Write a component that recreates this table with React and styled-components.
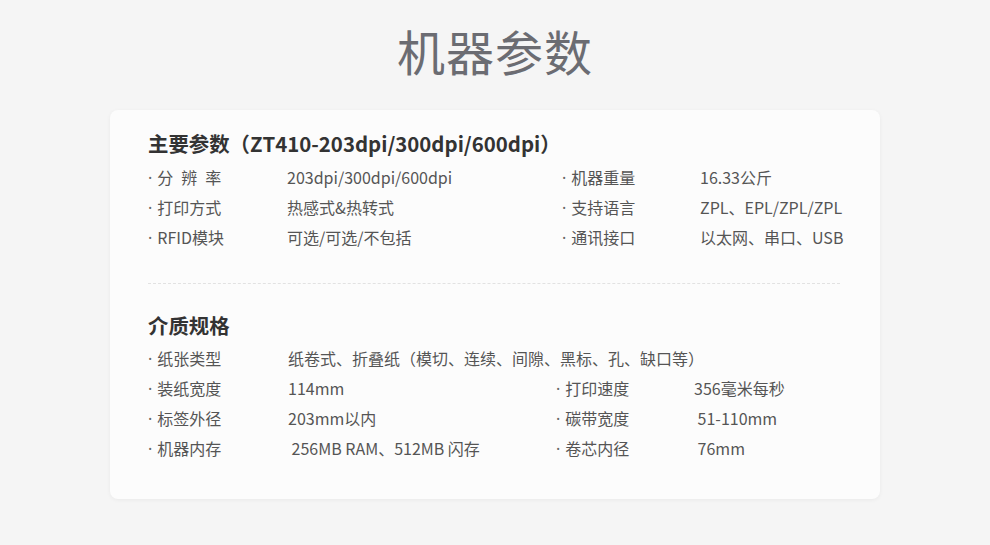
import React from 'react';
import styled, { createGlobalStyle } from 'styled-components';

const GlobalStyle = createGlobalStyle`
  html, body {
    margin: 0;
    padding: 0;
    background: #f5f5f5;
  }
  body {
    font-family: "Noto Sans CJK SC", "Noto Sans", sans-serif;
  }
`;

const mainParams = [
  ['分\u2002辨\u2002率', '203dpi/300dpi/600dpi', '机器重量', '16.33公斤'],
  ['打印方式', '热感式&热转式', '支持语言', 'ZPL、EPL/ZPL/ZPL'],
  ['RFID模块', '可选/可选/不包括', '通讯接口', '以太网、串口、USB'],
];

const mediaParams = [
  ['纸张类型', '纸卷式、折叠纸（模切、连续、间隙、黑标、孔、缺口等）'],
  ['装纸宽度', '114mm', '打印速度', '356毫米每秒'],
  ['标签外径', '203mm以内', '碳带宽度', '\u00a051-110mm'],
  ['机器内存', '\u00a0256MB RAM、512MB 闪存', '卷芯内径', '\u00a076mm'],
];

const App = () => {
  return (
    <>
      <GlobalStyle />
      <Page>
        <Title>机器参数</Title>
        <Card>
          <Heading>主要参数（ZT410-203dpi/300dpi/600dpi）</Heading>
          <Table cols="139px 275px 138px 1fr" top="5px">
            {mainParams.map((row, idx) => (
              <Row key={idx} row={row} />
            ))}
          </Table>
          <Divider />
          <Heading>介质规格</Heading>
          <Table cols="140px 268px 138px 1fr" top="4px">
            {mediaParams.map((row, idx) => (
              <Row key={idx} row={row} />
            ))}
          </Table>
        </Card>
      </Page>
    </>
  );
};

const Row = ({ row }) => (
  <>
    <Label>
      <Dot>·</Dot>
      {row[0]}
    </Label>
    {row.length === 2 ? (
      <Value span>{row[1]}</Value>
    ) : (
      <>
        <Value>{row[1]}</Value>
        <Label>
          <Dot>·</Dot>
          {row[2]}
        </Label>
        <Value>{row[3]}</Value>
      </>
    )}
  </>
);

const Page = styled.div`
  width: 990px;
  height: 545px;
  display: flex;
  flex-direction: column;
  align-items: center;
  box-sizing: border-box;
  padding-top: 18px;
`;

const Title = styled.h1`
  margin: 0;
  font-size: 48px;
  line-height: 64px;
  font-weight: 400;
  color: #6b6c72;
  letter-spacing: 1px;
`;

const Card = styled.div`
  margin-top: 28px;
  width: 770px;
  height: 389px;
  box-sizing: border-box;
  background: #fcfcfc;
  border-radius: 8px;
  box-shadow: 0 1px 4px rgba(0, 0, 0, 0.05);
  padding: 19px 38px 0 38px;
`;

const Heading = styled.h2`
  margin: 0;
  font-size: 20.4px;
  line-height: 28px;
  font-weight: 700;
  color: #333;
`;

const Table = styled.div`
  display: grid;
  grid-template-columns: ${(p) => p.cols};
  grid-auto-rows: 30px;
  align-items: center;
  margin-top: ${(p) => p.top};
`;

const Label = styled.div`
  font-size: 16px;
  color: #555;
  white-space: pre;
`;

const Dot = styled.span`
  font-family: "Noto Sans", sans-serif;
  color: #666;
  margin-right: 5px;
`;

const Value = styled.div`
  font-size: 16px;
  color: #555;
  white-space: pre;
  grid-column: ${(p) => (p.span ? '2 / span 3' : 'auto')};
`;

const Divider = styled.div`
  margin: 31px 0 27px 0;
  width: 692px;
  border-top: 1px dashed #e2e2e2;
`;

export default App;
